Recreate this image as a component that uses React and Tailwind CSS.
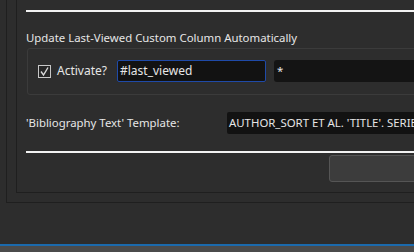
import React from 'react';

const font = { fontFamily: '"Noto Sans", "Open Sans", sans-serif' };

export default function App() {
  return (
    <div
      className="w-[414px] h-[252px] overflow-hidden bg-[#2d2d2d] text-[11.4px] text-[#e6e6e6] flex flex-col"
      style={font}
    >
      {/* outer frame */}
      <div className="ml-[6px] w-[520px] h-[203px] border-l border-b border-[#1f1f1f] pl-[9px] shrink-0">
        {/* inner frame */}
        <div className="w-full h-[193px] border-l border-b border-[#1f1f1f] pl-[9px] flex flex-col">
          <div className="mt-[10px] h-[2px] bg-[#f2f2f2]" />

          <div className="mt-[18px] h-[16px] leading-[16px]">
            Update Last-Viewed Custom Column Automatically
          </div>

          {/* group box */}
          <div className="mt-[2px] ml-[1px] h-[47px] border border-[#3b3b3b] rounded-[3px] pt-[11px] pl-[10px] flex">
            <label className="w-[79px] h-[22px] flex items-center">
              <span className="w-[13px] h-[13px] border border-[#c8c8c8] bg-[#262626] flex items-center justify-center">
                <svg width="11" height="11" viewBox="0 0 11 11">
                  <path d="M2 5.5 L4.5 9 L9 1.5" fill="none" stroke="#d8d8d8" strokeWidth="1.4" />
                </svg>
              </span>
              <span className="ml-[6px] text-[12px]">Activate?</span>
            </label>
            <div className="w-[149px] h-[22px] bg-[#121212] border border-[#1f4aa8] rounded-[2px] pl-[2px] flex items-center text-[12px]">
              #last_viewed
            </div>
            <div className="ml-[8px] flex-1 h-[22px] bg-[#141414] rounded-[3px] pl-[3px] flex items-center">
              *
            </div>
          </div>

          {/* template row */}
          <div className="mt-[17px] h-[22px] flex">
            <div className="w-[201px] flex items-center">'Bibliography Text' Template:</div>
            <div className="flex-1 bg-[#121212] rounded-[2px] pl-[2px] flex items-center whitespace-nowrap">
              AUTHOR_SORT ET AL. 'TITLE'. SERIES
            </div>
          </div>

          <div className="mt-[17px] h-[2px] bg-[#f2f2f2]" />

          <div className="mt-[2px] ml-[303px] h-[27px] border border-[#555555] bg-[#3c3c3c] rounded-[3px]" />
        </div>
      </div>

      <div className="mt-[41px] h-[2px] bg-[#1b6aad] shrink-0" />
      <div className="flex-1 bg-[#4b4b4b]" />
    </div>
  );
}
